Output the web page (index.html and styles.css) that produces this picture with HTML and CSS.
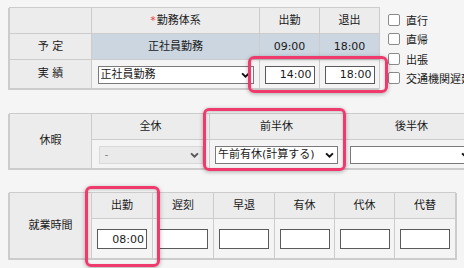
FILE: index.html
```html
<!DOCTYPE html>
<html lang="ja">
<head>
<meta charset="utf-8">
<link rel="stylesheet" href="styles.css">
</head>
<body>
<div class="page">
  <div class="top">
    <table class="grid g1">
      <tr class="hrow">
        <th class="w82"></th>
        <th class="w168"><span class="req">*</span>勤務体系</th>
        <th class="w60">出勤</th>
        <th class="w60">退出</th>
      </tr>
      <tr class="prow">
        <th>予&nbsp;定</th>
        <td class="plan">正社員勤務</td>
        <td class="plan num">09:00</td>
        <td class="plan num">18:00</td>
      </tr>
      <tr class="arow">
        <th>実&nbsp;績</th>
        <td><span class="sel s156"><select><option>正社員勤務</option></select><svg class="chev" viewBox="0 0 10 6"><path d="M1.2 1.2 5 4.8 8.8 1.2"/></svg></span></td>
        <td><input class="time" type="text" value="14:00"></td>
        <td><input class="time" type="text" value="18:00"></td>
      </tr>
    </table>
    <ul class="checks">
      <li><input type="checkbox">直行</li>
      <li><input type="checkbox">直帰</li>
      <li><input type="checkbox">出張</li>
      <li><input type="checkbox">交通機関遅延</li>
    </ul>
  </div>

  <table class="grid g2">
    <tr class="hrow">
      <th class="w82" rowspan="2">休暇</th>
      <th class="w118">全休</th>
      <th class="w134">前半休</th>
      <th class="w136">後半休</th>
    </tr>
    <tr class="arow">
      <td><span class="sel s104 dis"><select disabled><option>-</option></select><svg class="chev" viewBox="0 0 10 6"><path d="M1.2 1.2 5 4.8 8.8 1.2"/></svg></span></td>
      <td><span class="sel s123"><select><option>午前有休(計算する)</option></select><svg class="chev" viewBox="0 0 10 6"><path d="M1.2 1.2 5 4.8 8.8 1.2"/></svg></span></td>
      <td><span class="sel s124"><select><option></option></select><svg class="chev" viewBox="0 0 10 6"><path d="M1.2 1.2 5 4.8 8.8 1.2"/></svg></span></td>
    </tr>
  </table>

  <table class="grid g3">
    <tr class="hrow">
      <th class="w82" rowspan="2">就業時間</th>
      <th class="w61">出勤</th>
      <th class="w61">遅刻</th>
      <th class="w61">早退</th>
      <th class="w60">有休</th>
      <th class="w60">代休</th>
      <th class="w61">代替</th>
    </tr>
    <tr class="arow">
      <td><input class="time tall" type="text" value="08:00"></td>
      <td><input class="time tall" type="text" value=""></td>
      <td><input class="time tall" type="text" value=""></td>
      <td><input class="time tall" type="text" value=""></td>
      <td><input class="time tall" type="text" value=""></td>
      <td><input class="time tall" type="text" value=""></td>
    </tr>
  </table>

  <div class="mark m1"></div>
  <div class="mark m2"></div>
  <div class="mark m3"></div>
</div>
</body>
</html>
```
FILE: styles.css
```css
* { box-sizing: border-box; }
html, body { margin: 0; padding: 0; }
body {
  background: #f5f5f5;
  font-family: "DejaVu Sans", "Noto Sans CJK JP", sans-serif;
  font-size: 11px;
  color: #1a1a1a;
  width: 464px;
  height: 268px;
  overflow: hidden;
}
.page {
  position: relative;
  padding: 7px 0 0 9px;
  width: 600px;
}
.top {
  display: flex;
  align-items: flex-start;
}

.grid {
  border-collapse: separate;
  border-spacing: 0;
  table-layout: fixed;
  border-top: 1px solid #cccccc;
  border-left: 1px solid #cccccc;
  box-shadow: -1px 1px 0 #cccccc;
  flex: none;
}
.g1 { width: 371px; }
.g2 { width: 471px; margin-top: 24px; }
.g3 { width: 447px; margin-top: 23px; box-shadow: -1px 1px 0 #cccccc, 1px 1px 0 #cccccc; }

.grid th, .grid td {
  padding: 0;
  border-right: 1px solid #cccccc;
  border-bottom: 1px solid #cccccc;
  text-align: center;
  vertical-align: middle;
  font-weight: normal;
  line-height: 14px;
  white-space: nowrap;
}
.grid th { background: #ececec; }
.grid td { background: #f4f4f4; }
.grid td.plan { background: #cbd6e1; }

.w82 { width: 82px; }
.w168 { width: 168px; }
.w60 { width: 60px; }
.w61 { width: 61px; }
.w118 { width: 118px; }
.w134 { width: 134px; }
.w136 { width: 136px; }

.hrow > * { height: 26px; }
.prow > * { height: 26px; }
.g1 .arow > *, .g2 .arow > * { height: 29px; }
.g3 .arow > * { height: 40px; }
.arow td { padding-top: 1px; }

.req { color: #e8383d; margin-right: 1px; }

.sel {
  position: relative;
  display: block;
  margin: 0 auto;
}
.s156 { width: 156px; }
.s104 { width: 104px; }
.s123 { width: 123px; }
.s124 { width: 124px; }
.sel select {
  -webkit-appearance: none;
  appearance: none;
  display: block;
  width: 100%;
  height: 18px;
  margin: 0;
  border: 1px solid #7a7a7a;
  border-radius: 0;
  background: #ffffff;
  font-family: "DejaVu Sans", "Noto Sans CJK JP", sans-serif;
  font-size: 11px;
  line-height: 16px;
  color: #1a1a1a;
  padding: 0 16px 0 2px;
  text-align: left;
}
.sel .chev {
  position: absolute;
  right: 4px;
  top: 6px;
  width: 9px;
  height: 6px;
  pointer-events: none;
}
.chev path {
  fill: none;
  stroke: #111111;
  stroke-width: 2.2;
}
.dis select {
  background: #e6e6e6;
  border-color: #cfcfcf;
  color: #555555;
  padding-left: 5px;
}
.dis .chev path { stroke: #555555; }

.time {
  display: block;
  margin: 0 auto;
  width: 50px;
  height: 18px;
  border: 1px solid #5a5a5a;
  border-radius: 0;
  background: #ffffff;
  padding: 0 2px 0 2px;
  font-family: "DejaVu Sans", "Noto Sans CJK JP", sans-serif;
  font-size: 11px;
  color: #1a1a1a;
  text-align: right;
}
.time.tall { height: 20px; }

.checks {
  list-style: none;
  margin: 3px 0 0 8px;
  padding: 0;
}
.checks li {
  display: flex;
  align-items: center;
  height: 19.5px;
  white-space: nowrap;
}
.checks input {
  -webkit-appearance: none;
  appearance: none;
  width: 12px;
  height: 12px;
  margin: 0 6px 0 0;
  border: 1px solid #8a8a8a;
  border-radius: 2px;
  background: #ffffff;
  flex: none;
}

.mark {
  position: absolute;
  border: 3px solid #ef3a6e;
  border-radius: 6px;
  box-shadow: 0 1px 4px rgba(0, 0, 0, 0.3), inset 0 1px 3px rgba(0, 0, 0, 0.2);
  pointer-events: none;
}
.m1 { left: 248px; top: 56px; width: 140px; height: 37px; }
.m2 { left: 203px; top: 108px; width: 143px; height: 63px; }
.m3 { left: 85px; top: 186px; width: 75px; height: 81px; }
```
